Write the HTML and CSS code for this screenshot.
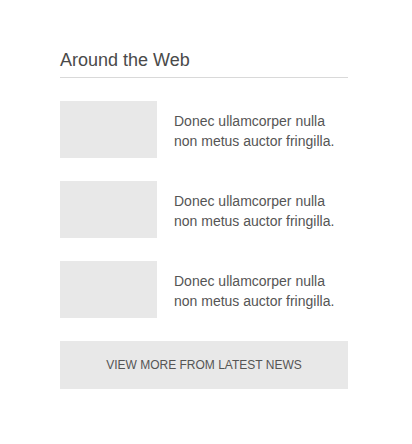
FILE: index.html
```html
<!DOCTYPE html>
<html>
<head>
<meta charset="utf-8">
<link rel="stylesheet" href="styles.css">
</head>
<body>
<section class="widget">
  <h2 class="widget-title">Around the Web</h2>
  <ul class="news-list">
    <li class="news-item">
      <div class="news-thumb"></div>
      <p class="news-text">Donec ullamcorper nulla non metus auctor fringilla.</p>
    </li>
    <li class="news-item">
      <div class="news-thumb"></div>
      <p class="news-text">Donec ullamcorper nulla non metus auctor fringilla.</p>
    </li>
    <li class="news-item">
      <div class="news-thumb"></div>
      <p class="news-text">Donec ullamcorper nulla non metus auctor fringilla.</p>
    </li>
  </ul>
  <a class="more-btn" href="#">VIEW MORE FROM LATEST NEWS</a>
</section>
</body>
</html>
```
FILE: styles.css
```css
html, body {
  margin: 0;
  padding: 0;
  background: #ffffff;
}
body {
  font-family: "Liberation Sans", Arial, sans-serif;
  color: #555555;
}
.widget {
  width: 288px;
  padding: 47px 0 0 60px;
}
.widget-title {
  margin: 0;
  font-size: 18px;
  font-weight: normal;
  color: #4a4a4a;
  line-height: 26px;
  padding-bottom: 4px;
  border-bottom: 1px solid #d9d9d9;
}
.news-list {
  list-style: none;
  margin: 23px 0 0 0;
  padding: 0;
  display: flex;
  flex-direction: column;
  gap: 23px;
}
.news-item {
  display: flex;
  align-items: flex-start;
  gap: 17px;
}
.news-thumb {
  width: 97px;
  height: 57px;
  background: #e8e8e8;
  flex: none;
}
.news-text {
  margin: 0;
  padding-top: 10px;
  font-size: 14px;
  line-height: 20px;
  color: #555555;
  width: 174px;
}
.more-btn {
  display: flex;
  align-items: center;
  justify-content: center;
  margin-top: 23px;
  height: 48px;
  background: #e8e8e8;
  color: #555555;
  font-size: 12px;
  text-decoration: none;
}
```
